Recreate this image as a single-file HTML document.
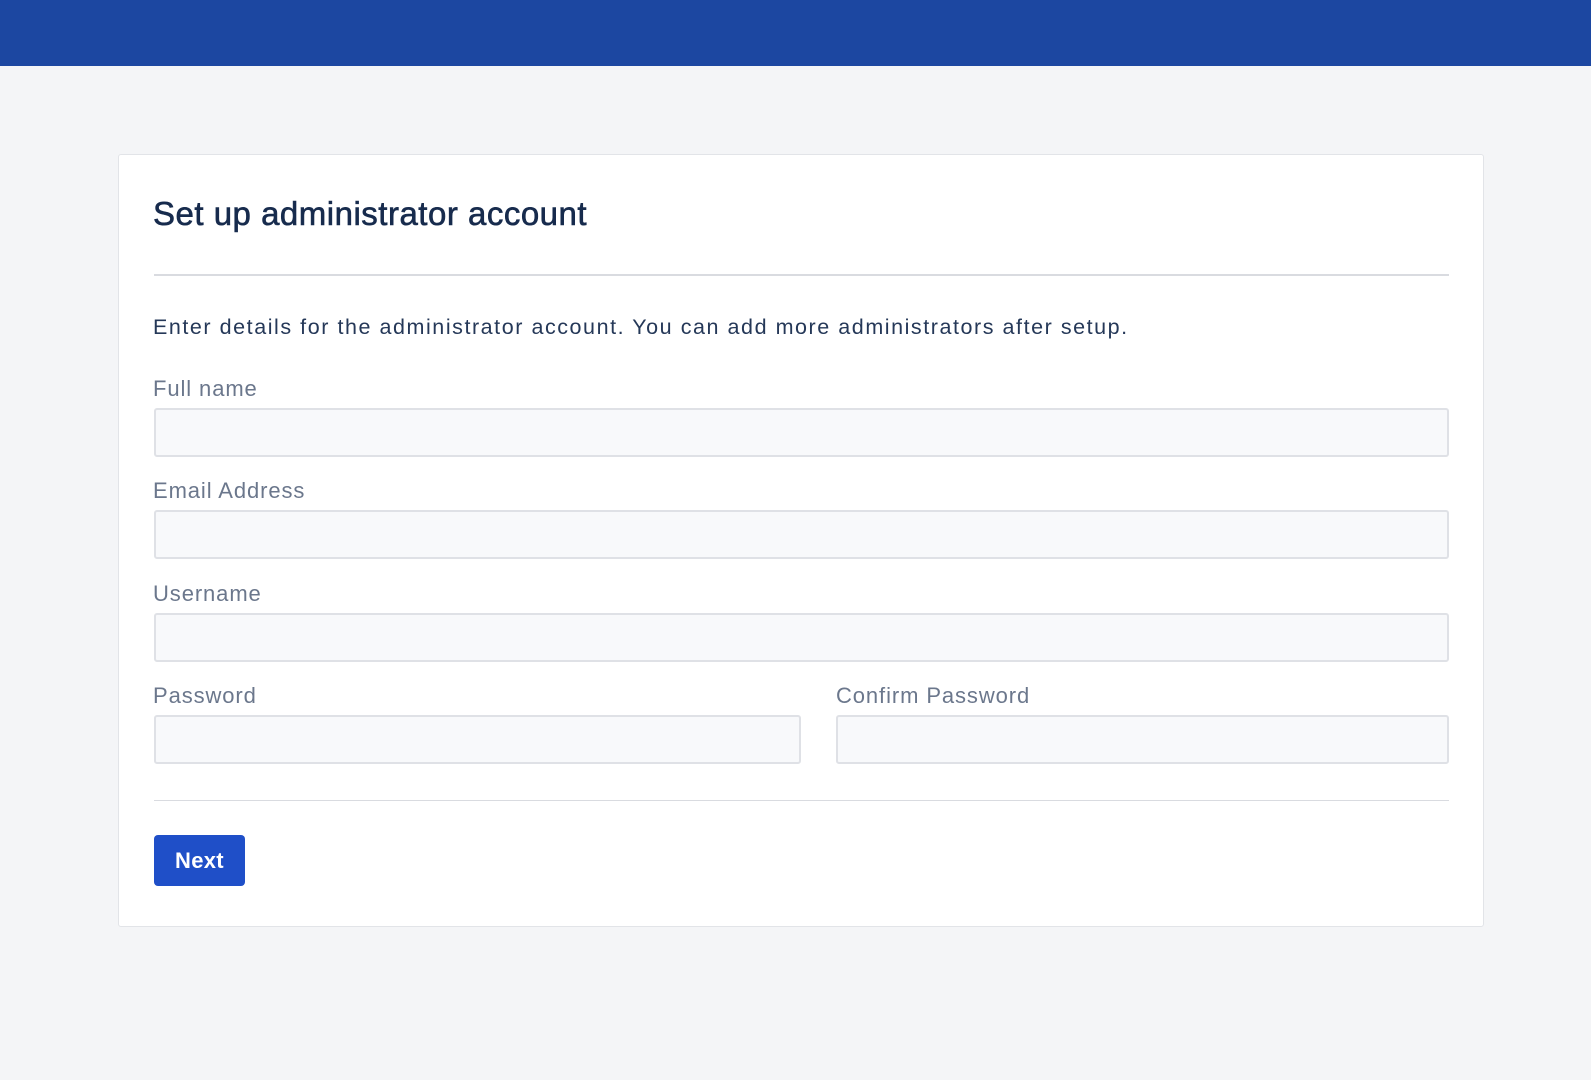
<!DOCTYPE html>
<html><head><meta charset="utf-8"><style>
*{box-sizing:border-box;margin:0;padding:0}
body{width:1591px;height:1080px;background:#f4f5f7;font-family:"Liberation Sans",sans-serif;position:relative;overflow:hidden}
.hdr{position:absolute;left:0;top:0;width:1591px;height:66px;background:#1c47a1}
.card{position:absolute;left:118px;top:154px;width:1366px;height:773px;background:#fff;border:1px solid #e2e4e8;border-radius:3px}
.a{position:absolute;white-space:nowrap}
h1{position:absolute;left:34px;top:40px;font-size:33px;font-weight:normal;color:#172b4d;letter-spacing:0.5px;-webkit-text-stroke:0.6px #172b4d}
.hr{position:absolute;left:35px;width:1295px;height:2px;background:#d9dbe0}
.desc{left:34px;top:160px;font-size:21.5px;color:#253858;letter-spacing:1.55px}
.lbl{font-size:22px;color:#6b778c;left:34px;letter-spacing:0.9px}
.in{position:absolute;height:49px;background:#f8f9fb;border:2px solid #dfe1e6;border-radius:3px}
.btn{position:absolute;left:35px;top:680px;width:91px;height:51px;background:#1f4fc8;border-radius:4px;color:#fff;font-weight:bold;font-size:22px;text-align:center;line-height:51px;letter-spacing:0.3px}
</style></head><body>
<div class="hdr"></div>
<div class="card">
<h1>Set up administrator account</h1>
<div class="hr" style="top:119px"></div>
<div class="a desc">Enter details for the administrator account. You can add more administrators after setup.</div>
<div class="a lbl" style="top:221px">Full name</div>
<div class="in" style="left:35px;top:253px;width:1295px"></div>
<div class="a lbl" style="top:323px">Email Address</div>
<div class="in" style="left:35px;top:355px;width:1295px"></div>
<div class="a lbl" style="top:426px">Username</div>
<div class="in" style="left:35px;top:458px;width:1295px"></div>
<div class="a lbl" style="top:528px">Password</div>
<div class="in" style="left:35px;top:560px;width:647px"></div>
<div class="a lbl" style="top:528px;left:717px">Confirm Password</div>
<div class="in" style="left:717px;top:560px;width:613px"></div>
<div class="hr" style="top:645px;height:1px"></div>
<div class="btn">Next</div>
</div>
</body></html>
